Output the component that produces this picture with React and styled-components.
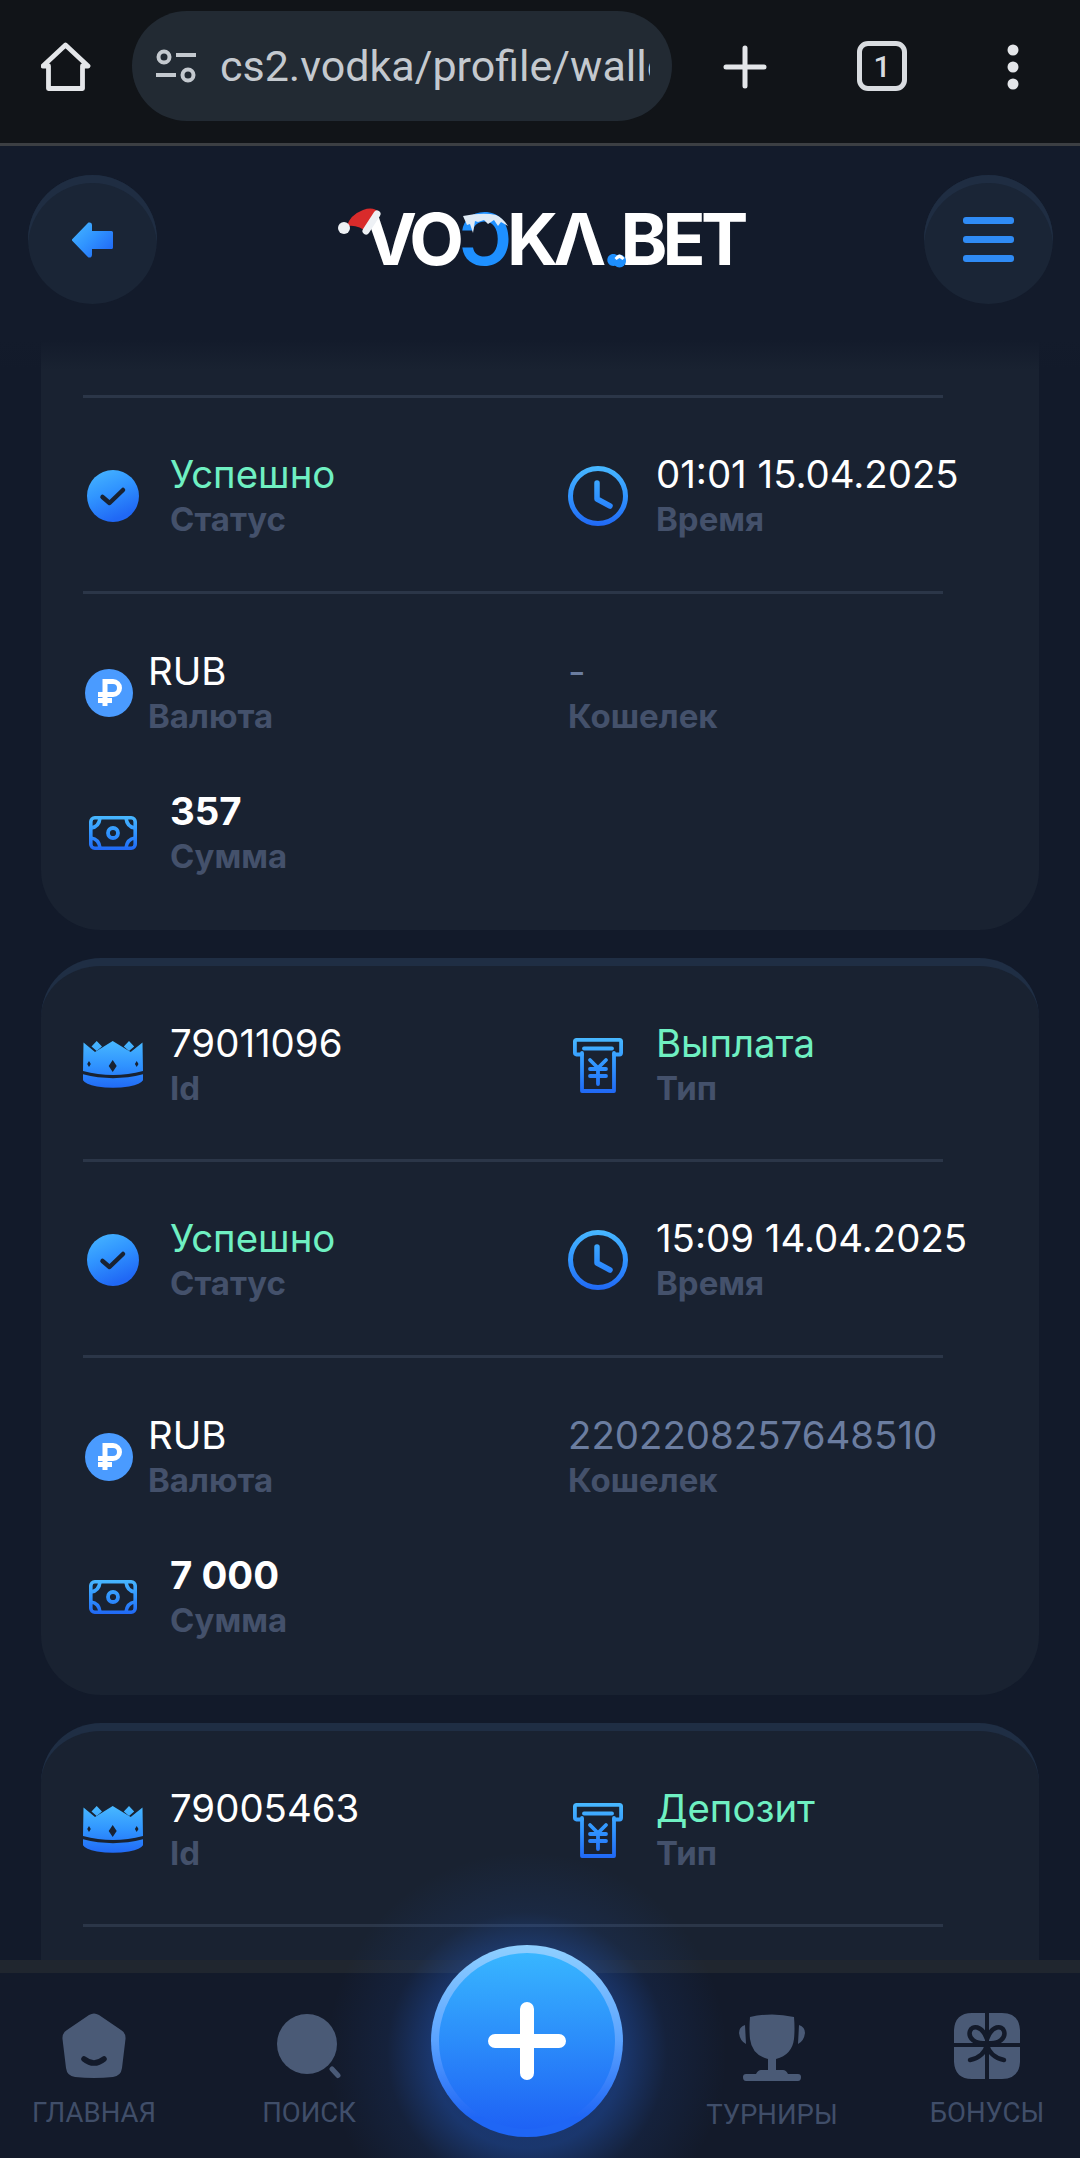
import React, { useId } from 'react';
import styled, { createGlobalStyle } from 'styled-components';

const GlobalStyle = createGlobalStyle`
  html, body {
    margin: 0;
    padding: 0;
    background: #121a2a;
  }
  * { box-sizing: border-box; }
`;

const Page = styled.div`
  width: 1080px;
  height: 2158px;
  display: flex;
  flex-direction: column;
  overflow: hidden;
  background: #121a2a;
  font-family: Inter, "Liberation Sans", sans-serif;
`;

/* browser chrome */
const BrowserBar = styled.div`
  flex: none;
  height: 146px;
  display: flex;
  align-items: flex-start;
  padding: 11px 0 0 41px;
  background: #111418;
  border-bottom: 3px solid #3c3f43;
`;

const BarIcon = styled.svg`
  flex: none;
  display: block;
  margin-top: ${p => p.$top}px;
  margin-left: ${p => p.$left}px;
`;

const UrlPill = styled.div`
  flex: none;
  width: 540px;
  height: 110px;
  margin-left: 41px;
  padding: 0 22px 0 24px;
  display: flex;
  align-items: center;
  gap: 24px;
  border-radius: 55px;
  background: #222a33;
`;

const UrlText = styled.div`
  flex: 1;
  min-width: 0;
  overflow: hidden;
  white-space: nowrap;
  font-family: Roboto, sans-serif;
  font-size: 43px;
  color: #c4c9cf;
`;

const TabCount = styled.div`
  flex: none;
  width: 50px;
  height: 50px;
  margin-top: 30px;
  margin-left: 90px;
  display: flex;
  align-items: center;
  justify-content: center;
  border: 5px solid #d9dce0;
  border-radius: 11px;
  font-family: Roboto, sans-serif;
  font-size: 30px;
  font-weight: 500;
  color: #d9dce0;
`;

/* site header */
const Header = styled.header`
  flex: none;
  position: relative;
  z-index: 2;
  height: 194px;
  padding: 29px 27px 0 28px;
  display: flex;
  justify-content: space-between;
  align-items: flex-start;
  background: #131b2b;
  &::after {
    content: "";
    position: absolute;
    left: 0;
    right: 0;
    top: 100%;
    height: 30px;
    background: linear-gradient(#131b2b, rgba(19, 27, 43, 0));
  }
`;

const RoundButton = styled.div`
  width: 129px;
  height: 129px;
  display: flex;
  align-items: center;
  justify-content: center;
  border-radius: 50%;
  background: #1a2536;
  box-shadow: inset 0 8px 0 #1f2d42;
`;

const Logo = styled.div`
  position: relative;
  margin-top: 29px;
  width: 405px;
  height: 70px;
  padding-left: 26px;
  white-space: nowrap;
  font-size: 71px;
  line-height: 70px;
  font-weight: 700;
  letter-spacing: -4.8px;
  color: #fff;
`;

const LogoBlue = styled.span`
  color: #1e90ff;
`;

const LogoArt = styled.svg`
  position: absolute;
  left: 0;
  top: -11px;
`;

const BurgerLines = styled.div`
  width: 51px;
  display: flex;
  flex-direction: column;
  gap: 12px;
`;

const BurgerLine = styled.div`
  height: 7px;
  border-radius: 3px;
  background: #2f8bf5;
`;

/* wallet list */
const Scroll = styled.main`
  flex: 1;
  min-height: 0;
  overflow: hidden;
  padding: 0 41px;
`;

const List = styled.div`
  display: flex;
  flex-direction: column;
  gap: 28px;
`;

const Card = styled.section`
  flex: none;
  width: 998px;
  padding-right: 96px;
  padding-left: 42px;
  height: ${p => p.$height}px;
  border-radius: 60px;
  background: #192231;
  ${p => p.$clipped
    ? 'padding-top: 55px; border-top-left-radius: 0; border-top-right-radius: 0;'
    : 'border-top: 8px solid #1f2e44;'}
`;

const Divider = styled.div`
  height: 3px;
  background: #2b3648;
`;

const Row = styled.div`
  display: grid;
  grid-template-columns: 485px 1fr;
  padding-top: ${p => p.$top}px;
  padding-bottom: ${p => p.$bottom}px;
`;

const Cell = styled.div`
  display: flex;
  align-items: center;
  gap: ${p => p.$gap ?? 27}px;
  white-space: nowrap;
`;

const IconBox = styled.div`
  flex: none;
  width: ${p => p.$w ?? 60}px;
  display: flex;
  justify-content: ${p => p.$left ? 'flex-start' : 'center'};
  padding-left: ${p => p.$left ? 2 : 0}px;
`;

const Value = styled.div`
  font-size: 38.4px;
  line-height: 44px;
  font-weight: ${p => p.$bold ? 700 : 400};
  color: ${p => p.$tone === 'green' ? '#6ff0c2' : p.$tone === 'muted' ? '#6b7da0' : '#fff'};
`;

const Label = styled.div`
  margin: 1px 0 -1px;
  font-size: 33px;
  line-height: 44px;
  font-weight: 700;
  color: #44516b;
`;

/* bottom navigation */
const Nav = styled.nav`
  flex: none;
  position: relative;
  z-index: 2;
  height: 198px;
  display: grid;
  grid-template-columns: 188px 242px 1fr 244px 186px;
  border-top: 13px solid #20262f;
  background: #131a2a;
`;

const NavItem = styled.div`
  grid-column: ${p => p.$col};
  display: flex;
  flex-direction: column;
  align-items: center;
  padding-top: 40px;
  gap: 18px;
  font-size: 27.5px;
  line-height: 32px;
  font-family: Roboto, sans-serif;
  color: #404e69;
  white-space: nowrap;
`;

const NavIcon = styled.svg`
  display: block;
`;

const FabGlow = styled.div`
  position: absolute;
  left: 327px;
  top: -121px;
  width: 400px;
  height: 400px;
  border-radius: 50%;
  background: radial-gradient(closest-side, rgba(40, 110, 240, 0.34) 48%, rgba(40, 110, 240, 0.09) 70%, rgba(40, 110, 240, 0) 100%);
  pointer-events: none;
`;

const Fab = styled.div`
  position: absolute;
  left: 431px;
  top: -28px;
  width: 192px;
  height: 192px;
  display: flex;
  align-items: center;
  justify-content: center;
  border-radius: 50%;
  border: 8px solid transparent;
  background:
    linear-gradient(#38b6ff, #1e62f5) padding-box,
    linear-gradient(#8fd0ff 0%, #5aa2ff 50%, #1f66f5 90%) border-box;
`;

const Grad = ({ id, w = 0, h }) => (
  <linearGradient id={id} x1="0" y1="0" x2={w} y2={h} gradientUnits="userSpaceOnUse">
    <stop offset="0" stopColor="#48b8ff" />
    <stop offset="0.5" stopColor="#3094ff" />
    <stop offset="1" stopColor="#2068f5" />
  </linearGradient>
);

const CrownIcon = () => {
  const id = useId();
  return (
    <svg width="60" height="48" viewBox="0 0 60 48">
      <defs><Grad id={id} h={48} /></defs>
      <path fill={`url(#${id})`} d="M0.500 1.600 L12 11 L29.700 0 L47.700 11 L59.500 1.600 L60 30 Q30 38 0 30 Z" />
      <path fill={`url(#${id})`} d="M13.700 0 L19 5.500 L13.700 10 L8.500 5.500 Z M46 0 L51.200 5.500 L46 10 L40.800 5.500 Z" />
      <path fill={`url(#${id})`} d="M0 33.300 Q30 41 60 33.300 V39.300 Q58 43 46 45.500 Q30 48 14 45.500 Q2 43 0 39.300 Z" />
      <path fill="#192231" d="M29.700 19 L33.700 25 L29.700 31 L25.700 25 Z M6 20 L7.800 23 L6 26 L4.200 23 Z M53.700 20 L55.500 23 L53.700 26 L51.900 23 Z" />
    </svg>
  );
};

const ReceiptIcon = () => {
  const id = useId();
  return (
    <svg width="50" height="55" viewBox="0 0 50 55" fill="none" stroke={`url(#${id})`} strokeWidth="3.800" strokeLinecap="round" strokeLinejoin="round">
      <defs><Grad id={id} h={55} /></defs>
      <path d="M9 16.500 H3.500 Q1.900 16.500 1.900 14.700 V3.500 Q1.900 1.900 3.500 1.900 H46.500 Q48.100 1.900 48.100 3.500 V14.700 Q48.100 16.500 46.500 16.500 H41" />
      <path d="M9 15 V53 H41 V15" />
      <path d="M11 10.500 H39" />
      <path d="M17 22 L25 30 L33 22 M25 30 V46 M17 31 H33 M17 38 H33" />
    </svg>
  );
};

const CheckIcon = () => {
  const id = useId();
  return (
    <svg width="52" height="52" viewBox="0 0 52 52">
      <defs><Grad id={id} w={22} h={52} /></defs>
      <circle cx="26" cy="26" r="26" fill={`url(#${id})`} />
      <path d="M15.500 27 L22.500 33 L36 20" fill="none" stroke="#192231" strokeWidth="4.500" strokeLinecap="round" strokeLinejoin="round" />
    </svg>
  );
};

const ClockIcon = () => {
  const id = useId();
  return (
    <svg width="60" height="60" viewBox="0 0 60 60" fill="none">
      <defs><Grad id={id} h={60} /></defs>
      <circle cx="30" cy="30" r="27.500" stroke={`url(#${id})`} strokeWidth="5" />
      <path d="M29 17 V33 L42 40" stroke={`url(#${id})`} strokeWidth="5.500" strokeLinecap="round" strokeLinejoin="round" />
    </svg>
  );
};

const RubleIcon = () => (
  <svg width="48" height="48" viewBox="0 0 48 48" fill="none">
    <circle cx="24" cy="24" r="24" fill="#4a9bff" />
    <path d="M20 37 V12.500 H28 A6.500 6.500 0 0 1 28 25.500 H13 M13 31.500 H27" stroke="#fff" strokeWidth="5" />
  </svg>
);

const MoneyIcon = () => {
  const id = useId();
  return (
    <svg width="48" height="34" viewBox="0 0 48 34" fill="none" stroke={`url(#${id})`} strokeWidth="3.600">
      <defs><Grad id={id} h={34} /></defs>
      <rect x="1.800" y="1.800" width="44.400" height="30.400" rx="4" />
      <circle cx="24" cy="17" r="5" strokeWidth="3.800" />
      <path d="M2 12 Q10 11 11 2 M46 12 Q38 11 37 2 M2 22 Q10 23 11 32 M46 22 Q38 23 37 32" />
    </svg>
  );
};

const Info = ({ value, label, tone, bold }) => (
  <div>
    <Value $tone={tone} $bold={bold}>{value}</Value>
    <Label>{label}</Label>
  </div>
);

const TopRow = ({ id, type }) => (
  <Row $top={55} $bottom={50}>
    <Cell>
      <IconBox><CrownIcon /></IconBox>
      <Info value={id} label="Id" />
    </Cell>
    <Cell $gap={28}>
      <IconBox><ReceiptIcon /></IconBox>
      <Info value={type} label="Тип" tone="green" />
    </Cell>
  </Row>
);

const DetailRows = ({ time, wallet, amount }) => (
  <>
    <Divider />
    <Row $top={54} $bottom={51}>
      <Cell>
        <IconBox><CheckIcon /></IconBox>
        <Info value="Успешно" label="Статус" tone="green" />
      </Cell>
      <Cell $gap={28}>
        <IconBox><ClockIcon /></IconBox>
        <Info value={time} label="Время" />
      </Cell>
    </Row>
    <Divider />
    <Row $top={55} $bottom={0}>
      <Cell $gap={13}>
        <IconBox $w={52} $left><RubleIcon /></IconBox>
        <Info value="RUB" label="Валюта" />
      </Cell>
      <Info value={wallet} label="Кошелек" tone="muted" />
    </Row>
    <Row $top={52} $bottom={0}>
      <Cell>
        <IconBox><MoneyIcon /></IconBox>
        <Info value={amount} label="Сумма" bold />
      </Cell>
    </Row>
  </>
);

const HomeIcon = () => (
  <BarIcon $top={31} $left={0} width="50" height="50" viewBox="0 0 50 50" fill="none" stroke="#e4e6e9" strokeWidth="4.800" strokeLinejoin="round">
    <path d="M24.500 3 L47 24 H41.500 V46.500 H7.500 V24 H2 Z" />
  </BarIcon>
);

const TuneIcon = () => (
  <svg width="40" height="34" viewBox="0 0 40 34" fill="none" stroke="#c4c9cf" strokeWidth="4" style={{ flex: 'none' }}>
    <circle cx="8" cy="8" r="5.500" />
    <path d="M20 6 H40" />
    <path d="M0 26 H20" />
    <circle cx="32" cy="26" r="5.500" />
  </svg>
);

const PlusIcon = () => (
  <BarIcon $top={34} $left={51} width="44" height="44" viewBox="0 0 44 44" stroke="#e4e6e9" strokeWidth="5" strokeLinecap="round">
    <path d="M22 3 V41 M3 22 H41" />
  </BarIcon>
);

const DotsIcon = () => (
  <BarIcon $top={33} $left={99} width="14" height="46" viewBox="0 0 14 46" fill="#e4e6e9">
    <circle cx="7" cy="6" r="5.500" />
    <circle cx="7" cy="23" r="5.500" />
    <circle cx="7" cy="40" r="5.500" />
  </BarIcon>
);

const BackArrow = () => {
  const id = useId();
  return (
    <svg width="41" height="36" viewBox="0 0 41 36">
      <defs><Grad id={id} w={34} h={36} /></defs>
      <path
        fill={`url(#${id})`}
        stroke={`url(#${id})`}
        strokeWidth="3"
        strokeLinejoin="round"
        d="M1.500 18 L17 2 Q18.500 1.500 18.500 3.500 V10.500 H39.500 V25.500 H18.500 V32.500 Q18.500 34.500 17 34 Z"
      />
    </svg>
  );
};

const LogoDecor = () => (
  <LogoArt width="405" height="90" viewBox="0 0 405 90">
    {/* santa hat on the V */}
    <path d="M9 33 Q12 22 25 17 Q36 13 41 20 L30 40 Q20 31 9 33 Z" fill="#d92b2b" />
    <circle cx="6" cy="35" r="6" fill="#eef1f5" />
    <path d="M39 21 L28 38" stroke="#eef1f5" strokeWidth="7" strokeLinecap="round" />
    {/* snow on the blue letter */}
    <path d="M125 23 Q145 19 158 22 Q165 25 170 33 L163 29 L160 33 L156 27 L150 31 L146 27 L140 29 L137 28 L135 40 L132 31 L129 32 Z" fill="#dfeaf5" />
    {/* blue dot with its snow cap */}
    <circle cx="281.500" cy="68" r="6.500" fill="#1e90ff" />
    <path d="M276.500 65 Q281.500 58 286.500 65 L284.500 67 L281.500 65 L278.500 67 Z" fill="#fff" />
  </LogoArt>
);

const HomeNav = () => (
  <NavIcon width="66" height="66" viewBox="0 0 66 66">
    <path fill="#4a5a76" d="M28 2 Q33 -1 38 2 L60 17 Q65 20 64.500 26 L61 55 Q60 63 52 64 Q33 66 14 64 Q6 63 5 55 L1.500 26 Q1 20 6 17 Z" />
    <path d="M23 46 Q33 54 43 46" fill="none" stroke="#131a2a" strokeWidth="5.500" strokeLinecap="round" />
  </NavIcon>
);

const SearchNav = () => (
  <NavIcon width="66" height="66" viewBox="0 0 66 66">
    <circle cx="31" cy="31" r="30" fill="#4a5a76" />
    <path d="M56 56 L62 62.500" stroke="#4a5a76" strokeWidth="5" strokeLinecap="round" />
  </NavIcon>
);

const CupNav = () => (
  <NavIcon width="66" height="68" viewBox="0 0 66 68">
    <path fill="#4a5a76" d="M11 4 Q33 -1 55 4 Q56 16 55 26 Q53 42 37 46 V57 H44 Q47 57 49 61 H59 Q62 61 62 64 Q62 68 59 68 H7 Q4 68 4 64 Q4 61 7 61 H17 Q19 57 22 57 H29 V46 Q13 42 11 26 Q10 16 11 4 Z" />
    <path fill="#4a5a76" d="M6 12 L7 31 Q1 28 0 20 Q0 14 6 12 Z M60 12 L59 31 Q65 28 66 20 Q66 14 60 12 Z" />
  </NavIcon>
);

const GiftNav = () => (
  <NavIcon width="66" height="66" viewBox="0 0 66 66">
    <path fill="#4a5a76" d="M31 0 H18 Q1 0 0 17 V30 H31 Z M35 0 H48 Q65 0 66 17 V30 H35 Z M31 34 V66 H18 Q1 66 0 49 V34 Z M35 34 V66 H48 Q65 66 66 49 V34 Z" />
    <g fill="none" stroke="#131a2a" strokeWidth="4.500" strokeLinecap="round">
      <path d="M33 30 C20 32 14 24 16 18 C18 12 28 12 33 26 C38 12 48 12 50 18 C52 24 46 32 33 30 Z" />
      <path d="M33 32 Q30 44 16 47 M33 32 Q36 44 50 47" />
    </g>
  </NavIcon>
);

const App = () => (
  <Page>
    <GlobalStyle />
    <BrowserBar>
      <HomeIcon />
      <UrlPill>
        <TuneIcon />
        <UrlText>cs2.vodka/profile/wallet</UrlText>
      </UrlPill>
      <PlusIcon />
      <TabCount>1</TabCount>
      <DotsIcon />
    </BrowserBar>

    <Header>
      <RoundButton><BackArrow /></RoundButton>
      <Logo>
        VO<LogoBlue>Ɔ</LogoBlue>KΛ<LogoBlue>.</LogoBlue>BET
        <LogoDecor />
      </Logo>
      <RoundButton>
        <BurgerLines>
          <BurgerLine />
          <BurgerLine />
          <BurgerLine />
        </BurgerLines>
      </RoundButton>
    </Header>

    <Scroll>
      <List>
        <Card $clipped $height={590}>
          <DetailRows time="01:01 15.04.2025" wallet="-" amount="357" />
        </Card>
        <Card $height={737}>
          <TopRow id="79011096" type="Выплата" />
          <DetailRows time="15:09 14.04.2025" wallet="2202208257648510" amount="7 000" />
        </Card>
        <Card $height={737}>
          <TopRow id="79005463" type="Депозит" />
          <Divider />
        </Card>
      </List>
    </Scroll>

    <Nav>
      <NavItem $col={1}><HomeNav />ГЛАВНАЯ</NavItem>
      <NavItem $col={2}><SearchNav />ПОИСК</NavItem>
      <NavItem $col={4}><CupNav />ТУРНИРЫ</NavItem>
      <NavItem $col={5}><GiftNav />БОНУСЫ</NavItem>
      <FabGlow />
      <Fab>
        <svg width="78" height="78" viewBox="0 0 78 78" stroke="#fff" strokeWidth="14" strokeLinecap="round">
          <path d="M39 7 V71 M7 39 H71" />
        </svg>
      </Fab>
    </Nav>
  </Page>
);

export default App;
